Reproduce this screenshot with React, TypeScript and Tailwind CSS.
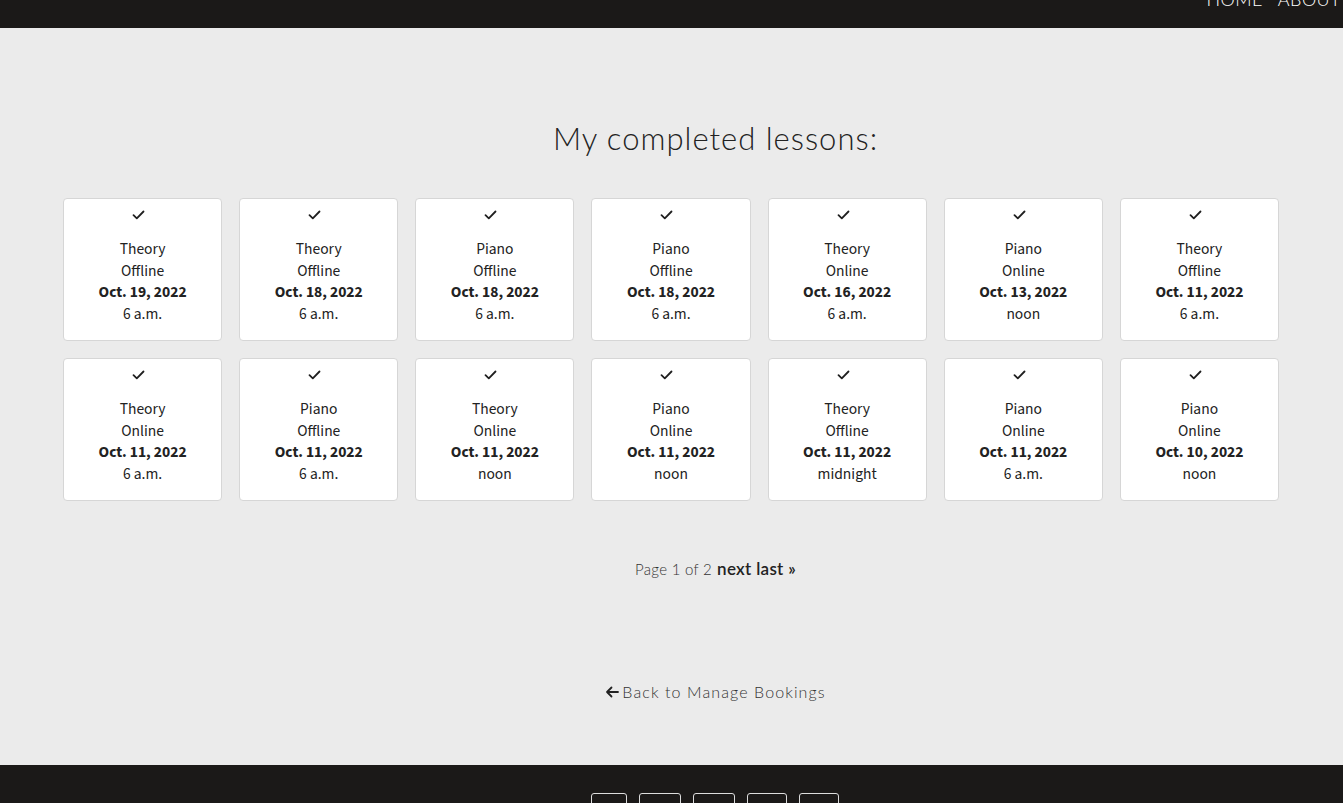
import React from "react";

const lessons: [string, string, string, string][] = [
  ["Theory", "Offline", "Oct. 19, 2022", "6 a.m."],
  ["Theory", "Offline", "Oct. 18, 2022", "6 a.m."],
  ["Piano", "Offline", "Oct. 18, 2022", "6 a.m."],
  ["Piano", "Offline", "Oct. 18, 2022", "6 a.m."],
  ["Theory", "Online", "Oct. 16, 2022", "6 a.m."],
  ["Piano", "Online", "Oct. 13, 2022", "noon"],
  ["Theory", "Offline", "Oct. 11, 2022", "6 a.m."],
  ["Theory", "Online", "Oct. 11, 2022", "6 a.m."],
  ["Piano", "Offline", "Oct. 11, 2022", "6 a.m."],
  ["Theory", "Online", "Oct. 11, 2022", "noon"],
  ["Piano", "Online", "Oct. 11, 2022", "noon"],
  ["Theory", "Offline", "Oct. 11, 2022", "midnight"],
  ["Piano", "Online", "Oct. 11, 2022", "6 a.m."],
  ["Piano", "Online", "Oct. 10, 2022", "noon"],
];

function Check() {
  return (
    <svg width="13" height="10" viewBox="0 0 13 10" fill="none" stroke="#1f1f1f" strokeWidth="1.8" strokeLinecap="round" strokeLinejoin="round">
      <path d="M1.5 5.2 L4.8 8.3 L11.5 1.5" />
    </svg>
  );
}

export default function App() {
  return (
    <div className="min-h-screen bg-[#ebebeb] flex flex-col" style={{ fontFamily: "'Noto Sans', sans-serif" }}>
      <header className="h-[28px] bg-[#1b1918] overflow-hidden flex justify-end">
        <nav className="flex gap-[15px] -mt-[14px] mr-[2px] text-white text-[18px] font-light tracking-wide" style={{ fontFamily: "'Lato', sans-serif" }}>
          <span>HOME</span>
          <span>ABOUT</span>
        </nav>
      </header>

      <main className="flex-1 flex flex-col items-center h-[737px]">
        <h1 className="mt-[91px] ml-[88px] text-[31px] text-[#222] font-light tracking-[1px] leading-[38px]" style={{ fontFamily: "'Lato', sans-serif" }}>
          My completed lessons:
        </h1>

        <div className="mt-[41px] -ml-[1px] grid grid-cols-7 gap-[17px] w-[1216px]">
          {lessons.map((l, i) => (
            <div key={i} className="h-[143px] bg-white border border-[#d6d6d6] rounded-[4px] flex flex-col items-center text-[#222] text-[15.5px] leading-[21.5px]" style={{ fontFamily: "'Source Sans 3', 'Noto Sans', sans-serif" }}>
              <div className="mt-[11px] -ml-[8px] h-[10px]">
                <Check />
              </div>
              <div className="mt-[19px]">{l[0]}</div>
              <div>{l[1]}</div>
              <div className="font-bold">{l[2]}</div>
              <div>{l[3]}</div>
            </div>
          ))}
        </div>

        <div className="mt-[55px] ml-[88px] flex items-baseline gap-[5px] text-[#333]" style={{ fontFamily: "'Lato', sans-serif" }}>
          <span className="text-[15px] font-light tracking-[0.3px]">Page 1 of 2</span>
          <span className="text-[17px] font-semibold text-[#222] tracking-[0.3px]">next last »</span>
        </div>

        <a className="mt-[98px] ml-[88px] flex items-center gap-[3px] text-[16px] text-[#333] font-light tracking-[1.1px]" style={{ fontFamily: "'Lato', sans-serif" }}>
          <svg width="14" height="12" viewBox="0 0 14 12" fill="none" stroke="#222" strokeWidth="1.8" strokeLinecap="round" strokeLinejoin="round">
            <path d="M13 6 H2 M6.5 1.5 L2 6 L6.5 10.5" />
          </svg>
          Back to Manage Bookings
        </a>
      </main>

      <footer className="h-[38px] bg-[#1b1918] flex justify-center overflow-hidden">
        <div className="mt-[28px] flex gap-[12px] ml-[87px]">
          <div className="w-[36px] h-[20px] border border-[#ddd] rounded-[3px]" />
          <div className="w-[42px] h-[20px] border border-[#ddd] rounded-[3px]" />
          <div className="w-[42px] h-[20px] border border-[#ddd] rounded-[3px]" />
          <div className="w-[40px] h-[20px] border border-[#ddd] rounded-[3px]" />
          <div className="w-[40px] h-[20px] border border-[#ddd] rounded-[3px]" />
        </div>
      </footer>
    </div>
  );
}
